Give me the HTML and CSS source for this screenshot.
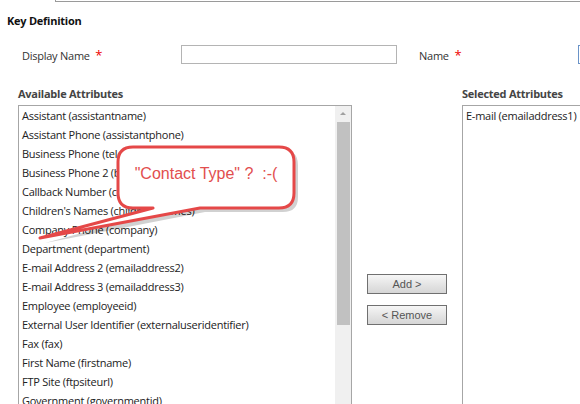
FILE: index.html
```html
<!DOCTYPE html>
<html>
<head>
<meta charset="utf-8">
<link rel="stylesheet" href="styles.css">
</head>
<body>
<div class="page">
  <div class="topbox"></div>
  <div class="section-title">Key Definition</div>
  <div class="name-row">
    <div class="field-label">Display Name <span class="req">*</span></div>
    <div class="input display-input"></div>
    <div class="field-label name-label">Name <span class="req">*</span></div>
    <div class="input name-input"></div>
  </div>
  <div class="attr-labels">
    <div class="attr-label avail">Available Attributes</div>
    <div class="attr-label sel">Selected Attributes</div>
  </div>
  <div class="lists">
    <div class="listbox avail-list">
      <ul class="items">
        <li>Assistant (assistantname)</li>
        <li>Assistant Phone (assistantphone)</li>
        <li>Business Phone (telephone1)</li>
        <li>Business Phone 2 (business2)</li>
        <li>Callback Number (callback)</li>
        <li>Children's Names (childrensnames)</li>
        <li>Company Phone (company)</li>
        <li>Department (department)</li>
        <li>E-mail Address 2 (emailaddress2)</li>
        <li>E-mail Address 3 (emailaddress3)</li>
        <li>Employee (employeeid)</li>
        <li>External User Identifier (externaluseridentifier)</li>
        <li>Fax (fax)</li>
        <li>First Name (firstname)</li>
        <li>FTP Site (ftpsiteurl)</li>
        <li>Government (governmentid)</li>
      </ul>
      <div class="scrollbar">
        <div class="arrow"></div>
        <div class="thumb"></div>
      </div>
    </div>
    <div class="buttons">
      <div class="btn">Add &gt;</div>
      <div class="btn">&lt; Remove</div>
    </div>
    <div class="listbox sel-list">
      <ul class="items">
        <li>E-mail (emailaddress1)</li>
      </ul>
    </div>
  </div>
  <div class="callout">
    <svg width="300" height="260" viewBox="0 0 300 260">
      <path class="shadow" d="M136 150 H283 Q298 150 298 165 V197 Q298 212 283 212 H205 L45 243 L158 212 H136 Q121 212 121 197 V165 Q121 150 136 150 Z"/>
      <path class="bubble" d="M133 147 H279 Q294 147 294 162 V193 Q294 208 279 208 H200 L40 238 L153 208 H133 Q118 208 118 193 V162 Q118 147 133 147 Z"/>
    </svg>
    <div class="callout-text">"Contact Type" ?&nbsp; :-(</div>
  </div>
</div>
</body>
</html>
```
FILE: styles.css
```css
html, body {
  margin: 0;
  padding: 0;
  background: #fff;
}
.page {
  position: relative;
  width: 580px;
  height: 404px;
  overflow: hidden;
  font-family: "Open Sans", "Noto Sans", sans-serif;
  font-size: 11px;
  letter-spacing: -0.25px;
  color: #222;
}
.topbox {
  margin-left: 55px;
  height: 1px;
  border-left: 1px solid #9a9a9a;
  border-bottom: 1px solid #9a9a9a;
}
.section-title {
  margin-top: 11px;
  padding-left: 7px;
  font-weight: bold;
  color: #111;
  line-height: 15px;
}
.name-row {
  display: flex;
  align-items: center;
  margin-top: 17px;
  height: 19px;
}
.name-row > * {
  flex-shrink: 0;
}
.field-label {
  color: #333;
  white-space: nowrap;
}
.field-label:first-child {
  margin-left: 22px;
  width: 159px;
}
.req {
  color: #e00;
  margin-left: 3px;
  font-size: 13px;
}
.input {
  box-sizing: border-box;
  height: 19px;
  border: 1px solid #b4b4b4;
  background: #fff;
}
.display-input {
  width: 216px;
}
.name-label {
  margin-left: 22px;
  width: 159px;
}
.name-input {
  width: 20px;
  border-color: #6a93c8;
}
.attr-labels {
  display: flex;
  margin-top: 22px;
  height: 15px;
  line-height: 15px;
}
.attr-label {
  font-weight: bold;
  color: #444;
  flex-shrink: 0;
}
.avail {
  margin-left: 18px;
  width: 444px;
}
.lists {
  display: flex;
  margin-top: 4px;
}
.lists > * {
  flex-shrink: 0;
}
.listbox {
  box-sizing: border-box;
  border: 1px solid #a6a6a6;
  height: 320px;
  display: flex;
}
.avail-list {
  margin-left: 18px;
  width: 334px;
}
.sel-list {
  width: 130px;
}
.items {
  list-style: none;
  margin: 0;
  padding: 0 0 0 3px;
  flex: 1;
  overflow: hidden;
}
.items li {
  height: 19px;
  line-height: 19px;
  white-space: nowrap;
  color: #222;
}
.scrollbar {
  width: 16px;
  background: #f0f0f0;
  display: flex;
  flex-direction: column;
  align-items: center;
}
.arrow {
  margin-top: 6px;
  width: 0;
  height: 0;
  border-left: 3px solid transparent;
  border-right: 3px solid transparent;
  border-bottom: 3px solid #a0a0a0;
}
.thumb {
  margin-top: 7px;
  width: 13px;
  height: 203px;
  background: #c1c1c1;
}
.buttons {
  width: 110px;
  display: flex;
  flex-direction: column;
  align-items: center;
  padding-top: 169px;
  gap: 11px;
}
.btn {
  box-sizing: border-box;
  width: 80px;
  height: 20px;
  line-height: 18px;
  text-align: center;
  border: 1px solid #707070;
  background: linear-gradient(#f6f6f6, #e2e2e2 60%, #d6d6d6);
  font-family: "Liberation Sans", Arial, sans-serif;
  font-size: 11px;
  letter-spacing: 0;
  color: #555;
}
.callout {
  position: absolute;
  left: 0;
  top: 0;
  width: 300px;
  height: 260px;
}
.callout svg {
  display: block;
}
.shadow {
  fill: rgba(0, 0, 0, 0.18);
  stroke: none;
}
.bubble {
  fill: #fff;
  stroke: #e54848;
  stroke-width: 3;
  stroke-linejoin: round;
}
.callout-text {
  position: absolute;
  left: 118px;
  top: 165px;
  width: 176px;
  text-align: center;
  font-family: "Liberation Sans", Arial, sans-serif;
  font-size: 16px;
  letter-spacing: 0;
  color: #e24e4e;
  white-space: nowrap;
}
```
